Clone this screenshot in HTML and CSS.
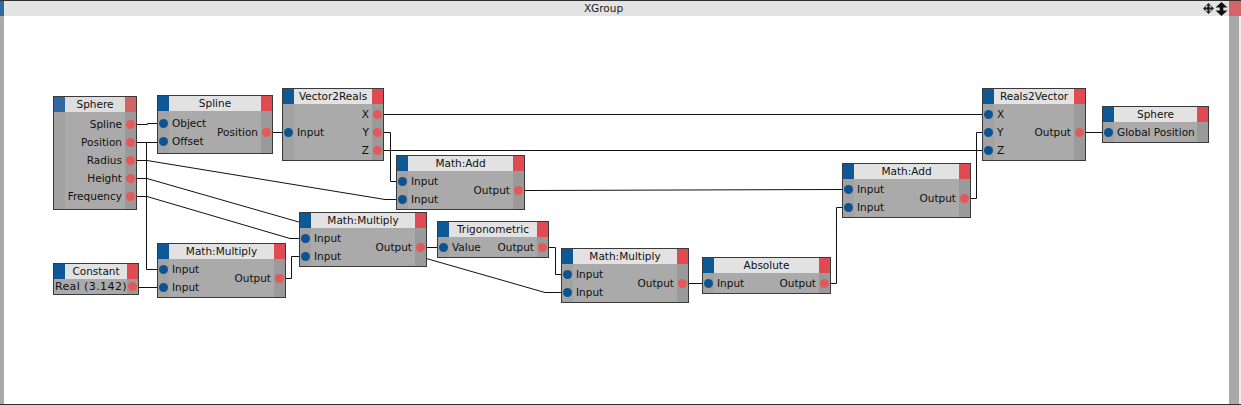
FILE: index.html
```html
<!DOCTYPE html>
<html>
<head>
<meta charset="utf-8">
<title>XGroup</title>
<link rel="stylesheet" href="styles.css">
</head>
<body>
<div class="window">
  <div class="titlebar">
    <div class="tb-blue"></div>
    <div class="tb-title">XGroup</div>
    <div class="tb-icons">
      <svg width="11" height="11" viewBox="0 0 11 11"><path d="M5.5 0 L8.3 2.8 H2.7 Z M5.5 11 L2.7 8.2 H8.3 Z M0 5.5 L2.8 2.7 V8.3 Z M11 5.5 L8.2 8.3 V2.7 Z" fill="#222"/><path d="M5.5 2 V9 M2 5.5 H9" stroke="#222" stroke-width="1"/><circle cx="5.5" cy="5.5" r="2.2" fill="#222"/></svg>
      <svg width="13" height="14" viewBox="0 0 13 14"><path d="M6.5 0 L12.5 5.5 H8.3 V8.5 H12.5 L6.5 14 L0.5 8.5 H4.7 V5.5 H0.5 Z" fill="#111"/></svg>
    </div>
    <div class="tb-red"></div>
  </div>
  <div class="main">
    <div class="side-left"></div>
    <div class="canvas">
      <svg class="wires" width="1225" height="388" viewBox="4 16 1225 388">
        <g fill="none" stroke="#111" stroke-width="1">
          <path d="M130 124.5 H147.5 V123.5 H164"/>
          <path d="M130 142.5 H164"/>
          <path d="M130 142.5 H146.5 V269.5 H164"/>
          <path d="M130 160.5 H147 L385 199.5 H403"/>
          <path d="M130 178.5 H147 L545 292.5 H568"/>
          <path d="M130 196.5 H147 L290 238.5 H306"/>
          <path d="M266 132.5 H289"/>
          <path d="M377 114.5 H989"/>
          <path d="M377 132.5 H390.5 V181.5 H403"/>
          <path d="M377 150.5 H989"/>
          <path d="M518 190.5 H530 L836 189.5 H849"/>
          <path d="M279 278.5 H291.5 V256.5 H306"/>
          <path d="M132 287.5 H164"/>
          <path d="M420 247.5 H444"/>
          <path d="M542 247.5 H555.5 V274.5 H568"/>
          <path d="M682 283.5 H709"/>
          <path d="M824 283.5 H836.5 V207.5 H849"/>
          <path d="M964 198.5 H976.5 V132.5 H989"/>
          <path d="M1079 132.5 H1109"/>
        </g>
      </svg>

      <div class="node n-sphere muted">
        <div class="nh"><span class="nh-b"></span><span class="nh-t">Sphere</span><span class="nh-r"></span></div>
        <div class="nb">
          <div class="outs">
            <div class="port">Spline<i></i></div>
            <div class="port">Position<i></i></div>
            <div class="port">Radius<i></i></div>
            <div class="port">Height<i></i></div>
            <div class="port">Frequency<i></i></div>
          </div>
        </div>
      </div>

      <div class="node n-spline">
        <div class="nh"><span class="nh-b"></span><span class="nh-t">Spline</span><span class="nh-r"></span></div>
        <div class="nb">
          <div class="ins">
            <div class="port"><i></i>Object</div>
            <div class="port"><i></i>Offset</div>
          </div>
          <div class="outs">
            <div class="port">Position<i></i></div>
          </div>
        </div>
      </div>

      <div class="node n-v2r">
        <div class="nh"><span class="nh-b"></span><span class="nh-t">Vector2Reals</span><span class="nh-r"></span></div>
        <div class="nb">
          <div class="ins">
            <div class="port"><i></i>Input</div>
          </div>
          <div class="outs">
            <div class="port">X<i></i></div>
            <div class="port">Y<i></i></div>
            <div class="port">Z<i></i></div>
          </div>
        </div>
      </div>

      <div class="node n-add1">
        <div class="nh"><span class="nh-b"></span><span class="nh-t">Math:Add</span><span class="nh-r"></span></div>
        <div class="nb">
          <div class="ins">
            <div class="port"><i></i>Input</div>
            <div class="port"><i></i>Input</div>
          </div>
          <div class="outs">
            <div class="port">Output<i></i></div>
          </div>
        </div>
      </div>

      <div class="node n-mulmid">
        <div class="nh"><span class="nh-b"></span><span class="nh-t">Math:Multiply</span><span class="nh-r"></span></div>
        <div class="nb">
          <div class="ins">
            <div class="port"><i></i>Input</div>
            <div class="port"><i></i>Input</div>
          </div>
          <div class="outs">
            <div class="port">Output<i></i></div>
          </div>
        </div>
      </div>

      <div class="node n-trig">
        <div class="nh"><span class="nh-b"></span><span class="nh-t">Trigonometric</span><span class="nh-r"></span></div>
        <div class="nb">
          <div class="ins">
            <div class="port"><i></i>Value</div>
          </div>
          <div class="outs">
            <div class="port">Output<i></i></div>
          </div>
        </div>
      </div>

      <div class="node n-const">
        <div class="nh"><span class="nh-b"></span><span class="nh-t">Constant</span><span class="nh-r"></span></div>
        <div class="nb">
          <div class="outs">
            <div class="port">Real (3.142)<i></i></div>
          </div>
        </div>
      </div>

      <div class="node n-mulbl">
        <div class="nh"><span class="nh-b"></span><span class="nh-t">Math:Multiply</span><span class="nh-r"></span></div>
        <div class="nb">
          <div class="ins">
            <div class="port"><i></i>Input</div>
            <div class="port"><i></i>Input</div>
          </div>
          <div class="outs">
            <div class="port">Output<i></i></div>
          </div>
        </div>
      </div>

      <div class="node n-mulr">
        <div class="nh"><span class="nh-b"></span><span class="nh-t">Math:Multiply</span><span class="nh-r"></span></div>
        <div class="nb">
          <div class="ins">
            <div class="port"><i></i>Input</div>
            <div class="port"><i></i>Input</div>
          </div>
          <div class="outs">
            <div class="port">Output<i></i></div>
          </div>
        </div>
      </div>

      <div class="node n-abs">
        <div class="nh"><span class="nh-b"></span><span class="nh-t">Absolute</span><span class="nh-r"></span></div>
        <div class="nb">
          <div class="ins">
            <div class="port"><i></i>Input</div>
          </div>
          <div class="outs">
            <div class="port">Output<i></i></div>
          </div>
        </div>
      </div>

      <div class="node n-add2">
        <div class="nh"><span class="nh-b"></span><span class="nh-t">Math:Add</span><span class="nh-r"></span></div>
        <div class="nb">
          <div class="ins">
            <div class="port"><i></i>Input</div>
            <div class="port"><i></i>Input</div>
          </div>
          <div class="outs">
            <div class="port">Output<i></i></div>
          </div>
        </div>
      </div>

      <div class="node n-r2v">
        <div class="nh"><span class="nh-b"></span><span class="nh-t">Reals2Vector</span><span class="nh-r"></span></div>
        <div class="nb">
          <div class="ins">
            <div class="port"><i></i>X</div>
            <div class="port"><i></i>Y</div>
            <div class="port"><i></i>Z</div>
          </div>
          <div class="outs">
            <div class="port">Output<i></i></div>
          </div>
        </div>
      </div>

      <div class="node n-sphere2">
        <div class="nh"><span class="nh-b"></span><span class="nh-t">Sphere</span><span class="nh-r"></span></div>
        <div class="nb">
          <div class="ins">
            <div class="port"><i></i>Global Position</div>
          </div>
        </div>
      </div>
    </div>
    <div class="side-right"></div>
  </div>
</div>
</body>
</html>
```

FILE: styles.css
```css
body {
  margin: 0;
  background: #ffffff;
  font-family: "DejaVu Sans", "Liberation Sans", sans-serif;
  color: #111;
}

.window {
  width: 1241px;
  height: 405px;
  box-sizing: border-box;
  border-top: 1px solid #303030;
  border-bottom: 1px solid #303030;
  display: flex;
  flex-direction: column;
  overflow: hidden;
}

.titlebar {
  flex: none;
  height: 15px;
  display: flex;
  background: #e3e3e3;
}

.tb-blue {
  width: 4px;
  background: #2e69a3;
}

.tb-title {
  flex: 1;
  text-align: center;
  font-size: 10.5px;
  line-height: 15px;
  color: #222;
}

.tb-icons {
  display: flex;
  align-items: center;
  gap: 1px;
  padding-right: 1px;
}

.tb-icons svg {
  display: block;
}

.tb-red {
  width: 12px;
  background: #d8626a;
}

.main {
  flex: 1;
  display: flex;
  min-height: 0;
}

.side-left {
  width: 4px;
  background: #a9a9a9;
}

.canvas {
  flex: 1;
  position: relative;
  background: #ffffff;
}

.side-right {
  width: 10px;
  background: #a9a9a9;
  border-right: 2px solid #efefef;
}

.wires {
  position: absolute;
  left: 0;
  top: 0;
  display: block;
}

/* Nodes */
.node {
  position: absolute;
  box-sizing: border-box;
  border: 1px solid #3a3a3a;
  overflow: hidden;
  font-size: 10.5px;
  color: #111;
}

.nh {
  display: flex;
  height: 15px;
}

.nh-b {
  width: 11px;
  flex: none;
  background: #0f5896;
}

.nh-r {
  width: 11px;
  flex: none;
  background: #e04a53;
}

.nh-t {
  flex: 1;
  min-width: 0;
  background: #e2e2e2;
  text-align: center;
  line-height: 15px;
  white-space: nowrap;
}

.muted .nh-b {
  background: #2f68a2;
}

.muted .nh-r {
  background: #d26466;
}

.muted .nh-t {
  background: #dedede;
}

.nb {
  display: flex;
  padding: 1px 0;
  background: linear-gradient(to right, #a2a2a2 0 11px, #aaaaaa 11px calc(100% - 11px), #9a9a9a calc(100% - 11px));
}

.ins,
.outs {
  display: flex;
  flex-direction: column;
  justify-content: center;
}

.outs {
  margin-left: auto;
  align-items: flex-end;
}

.port {
  display: flex;
  align-items: center;
  gap: 4px;
  height: 18px;
  white-space: nowrap;
}

.ins .port {
  padding-left: 1px;
}

.outs .port {
  padding-right: 1px;
  justify-content: flex-end;
}

.port i {
  display: block;
  flex: none;
  width: 9px;
  height: 9px;
  border-radius: 50%;
}

.ins .port i {
  background: #0d5392;
}

.outs .port i {
  background: #e35959;
}

/* Node placement on the canvas (canvas origin is page x=4, y=16) */
.n-sphere { left: 49px; top: 80px; width: 84px; }
.n-sphere .nb { padding: 3px 0 4px; }
.n-spline { left: 153px; top: 79px; width: 116px; }
.n-spline .nb { padding: 3px 0; }
.n-v2r { left: 278px; top: 72px; width: 102px; }
.n-add1 { left: 392px; top: 139px; width: 129px; }
.n-mulmid { left: 295px; top: 196px; width: 128px; }
.n-trig { left: 433px; top: 205px; width: 112px; }
.n-const { left: 49px; top: 247px; width: 86px; }
.n-mulbl { left: 153px; top: 227px; width: 129px; }
.n-mulr { left: 557px; top: 232px; width: 128px; }
.n-abs { left: 698px; top: 241px; width: 129px; }
.n-add2 { left: 838px; top: 147px; width: 129px; }
.n-r2v { left: 978px; top: 72px; width: 104px; }
.n-sphere2 { left: 1098px; top: 90px; width: 107px; }

.n-const .nb {
  padding: 0;
  height: 15px;
  background: linear-gradient(to right, #aaaaaa calc(100% - 11px), #9a9a9a calc(100% - 11px));
}

.n-const .outs {
  width: 100%;
}

.n-const .port {
  height: 15px;
  gap: 1px;
  font-size: 11px;
  letter-spacing: 0.4px;
}
```
